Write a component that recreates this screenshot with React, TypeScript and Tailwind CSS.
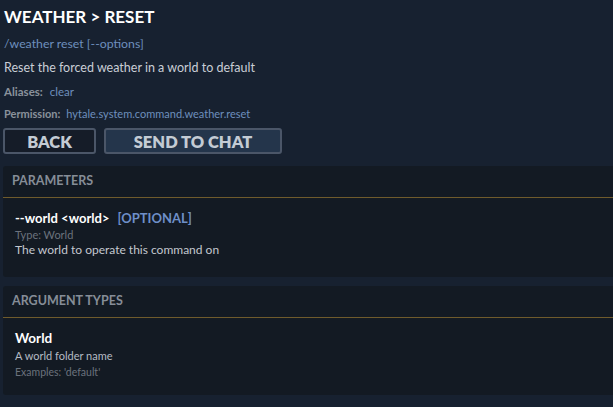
import React from 'react';

const App: React.FC = () => {
  return (
    <div
      className="w-[613px] h-[407px] overflow-hidden bg-[#172130] text-[#c9ced6]"
      style={{ fontFamily: 'Lato, "Noto Sans", sans-serif' }}
    >
      <div className="pl-[4px] pt-[7px]">
        <h1 className="text-[17px] leading-[20px] font-bold text-white">WEATHER &gt; RESET</h1>
        <div className="mt-[9px] text-[12.3px] leading-[16px] text-[#6e8fbd]">/weather reset [--options]</div>
        <div className="mt-[8px] text-[12.5px] leading-[16px] text-[#c9ced6]">Reset the forced weather in a world to default</div>
        <div className="mt-[9px] flex gap-[7px] text-[11.5px] leading-[14px]">
          <span className="font-bold text-[#8a929c]">Aliases:</span>
          <span className="text-[#6e8fbd]">clear</span>
        </div>
        <div className="mt-[8px] flex gap-[6px] text-[11px] leading-[14px]">
          <span className="font-bold text-[#8a929c]">Permission:</span>
          <span className="text-[#6e8fbd]">hytale.system.command.weather.reset</span>
        </div>
      </div>

      <div className="mt-[7px] ml-[3px] flex gap-[8px]">
        <button className="w-[93px] h-[26px] rounded-[3px] border-2 border-[#4b5668] bg-[#151c28] text-[16.5px] font-extrabold text-[#c3cbd4]">
          BACK
        </button>
        <button className="w-[178px] h-[26px] rounded-[3px] border-2 border-[#4b5668] bg-[#24354b] text-[16.5px] font-extrabold text-[#c3cbd4]">
          SEND TO CHAT
        </button>
      </div>

      <section className="mt-[12px] ml-[3px] rounded-l-[3px] bg-[#131a23]">
        <div className="h-[31px] pl-[9px] flex items-center text-[12.5px] font-bold text-[#868d97]">
          PARAMETERS
        </div>
        <div className="h-px bg-[#6f5b2c]" />
        <div className="pl-[12px] pt-[12px] pb-[20px]">
          <div className="flex gap-[8px] text-[13px] leading-[16px] font-bold">
            <span className="text-white">--world &lt;world&gt;</span>
            <span className="text-[#6e8fc8]">[OPTIONAL]</span>
          </div>
          <div className="mt-[2px] text-[11px] leading-[14px] text-[#6b727d]">Type: World</div>
          <div className="text-[12px] leading-[15px] text-[#c3c8cf]">The world to operate this command on</div>
        </div>
      </section>

      <section className="mt-[9px] ml-[3px] rounded-l-[3px] bg-[#131a23] h-[109px]">
        <div className="h-[31px] pl-[9px] flex items-center text-[12.5px] font-bold text-[#868d97]">
          ARGUMENT TYPES
        </div>
        <div className="h-px bg-[#6f5b2c]" />
        <div className="pl-[12px] pt-[12px]">
          <div className="text-[13.5px] leading-[17px] font-bold text-white">World</div>
          <div className="mt-[1px] text-[11px] leading-[15px] text-[#b5bbc3]">A world folder name</div>
          <div className="mt-[2px] text-[10.5px] leading-[14px] text-[#6b727d]">Examples: 'default'</div>
        </div>
      </section>
    </div>
  );
};

export default App;
